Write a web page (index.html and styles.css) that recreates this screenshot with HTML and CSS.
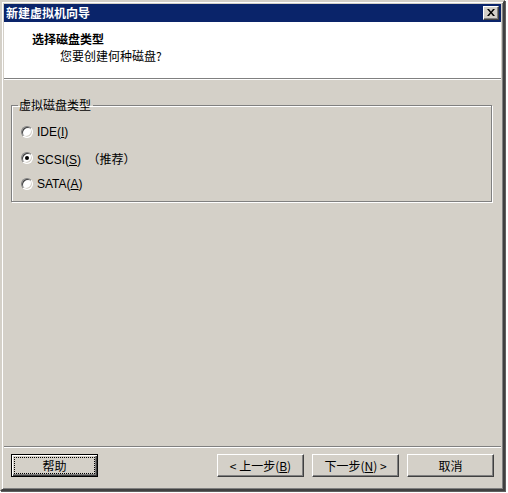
FILE: index.html
```html
<!DOCTYPE html>
<html lang="zh-CN">
<head>
<meta charset="utf-8">
<title>新建虚拟机向导</title>
<link rel="stylesheet" href="styles.css">
</head>
<body>
<div class="window">
  <div class="titlebar">
    <span class="title">新建虚拟机向导</span>
    <span class="close-btn">
      <svg width="8" height="7" viewBox="0 0 8 7"><path d="M0 0h2l2 2.5L6 0h2L5 3.5 8 7H6L4 4.5 2 7H0l3-3.5z" fill="#000"/></svg>
    </span>
  </div>
  <div class="header">
    <div class="heading">选择磁盘类型</div>
    <div class="subheading">您要创建何种磁盘?</div>
  </div>
  <div class="content">
    <fieldset class="group">
      <legend class="legend">虚拟磁盘类型</legend>
      <div class="option"><span class="radio"></span><span class="label">IDE(<u>I</u>)</span></div>
      <div class="option"><span class="radio checked"></span><span class="label">SCSI(<u>S</u>) <span class="cjk">（推荐）</span></span></div>
      <div class="option"><span class="radio"></span><span class="label">SATA(<u>A</u>)</span></div>
    </fieldset>
  </div>
  <div class="separator"></div>
  <div class="buttons">
    <span class="btn default"><span class="focus">帮助</span></span>
    <span class="spacer"></span>
    <span class="btn">&lt; 上一步(<u>B</u>)</span>
    <span class="btn">下一步(<u>N</u>) &gt;</span>
    <span class="btn">取消</span>
  </div>
</div>
</body>
</html>
```

FILE: styles.css
```css
html, body {
  margin: 0;
  padding: 0;
  background: #ffffff;
}
body {
  width: 508px;
  height: 493px;
  font-family: "Liberation Sans", "Noto Sans CJK SC", sans-serif;
  font-size: 12px;
  color: #000;
}
.window {
  box-sizing: border-box;
  width: 505px;
  height: 491px;
  background: #d4d0c8;
  border: 2px solid;
  border-color: #d4d0c8 #404040 #404040 #d4d0c8;
  box-shadow: inset 1px 1px 0 #ffffff, inset -1px -1px 0 #808080, 1px 1px 0 #606060;
  padding: 2px;
  display: flex;
  flex-direction: column;
}
.titlebar {
  height: 18px;
  background: #0a246a;
  display: flex;
  align-items: center;
  justify-content: space-between;
  padding: 0 2px 0 2px;
}
.title {
  color: #fff;
  font-family: "Noto Sans CJK SC", sans-serif;
  font-weight: bold;
  font-size: 12px;
  line-height: 16px;
}
.close-btn {
  box-sizing: border-box;
  width: 16px;
  height: 14px;
  background: #d4d0c8;
  border: 1px solid;
  border-color: #ffffff #404040 #404040 #ffffff;
  box-shadow: inset -1px -1px 0 #808080;
  display: flex;
  align-items: center;
  justify-content: center;
  padding: 0 1px 1px 0;
}
.close-btn svg { display: block; }
.header {
  height: 57px;
  background: #ffffff;
  border-bottom: 1px solid #808080;
  box-shadow: 0 1px 0 #ffffff;
  box-sizing: border-box;
  padding: 9px 0 0 28px;
}
.heading {
  font-family: "Noto Sans CJK SC", sans-serif;
  font-weight: bold;
  font-size: 12px;
  line-height: 16px;
}
.subheading {
  font-family: "Noto Sans CJK SC", sans-serif;
  font-size: 12px;
  line-height: 16px;
  margin: 1px 0 0 28px;
}
.content {
  flex: 1;
  padding: 19px 9px 0 7px;
}
.group {
  margin: 0;
  padding: 7px 0 0 9px;
  height: 104px;
  box-sizing: border-box;
  border: 1px solid #808080;
  box-shadow: 1px 1px 0 #ffffff, inset 1px 1px 0 #ffffff;
}
.legend {
  font-family: "Noto Sans CJK SC", sans-serif;
  font-size: 12px;
  line-height: 14px;
  padding: 0 2px 0 1px;
  margin-left: -3px;
}
.option {
  display: flex;
  align-items: center;
  height: 26px;
}
.radio {
  box-sizing: border-box;
  width: 12px;
  height: 12px;
  border-radius: 50%;
  background: #ffffff;
  border: 1px solid;
  border-color: #808080 #ffffff #ffffff #808080;
  box-shadow: inset 1px 1px 0 #404040, inset -1px -1px 0 #d4d0c8;
  margin-right: 4px;
  display: flex;
  align-items: center;
  justify-content: center;
}
.radio.checked::after {
  content: "";
  width: 4px;
  height: 4px;
  border-radius: 50%;
  background: #000;
}
.label {
  font-family: "Liberation Sans", "Noto Sans CJK SC", sans-serif;
  font-size: 12px;
}
.cjk {
  font-family: "Noto Sans CJK SC", sans-serif;
  margin-left: 3px;
}
.separator {
  height: 1px;
  background: #808080;
  border-bottom: 1px solid #ffffff;
  margin: 0 0 6px 0;
}
.buttons {
  display: flex;
  gap: 8px;
  padding: 0 7px 10px 7px;
}
.spacer { flex: 1; }
.btn {
  box-sizing: border-box;
  width: 87px;
  height: 23px;
  background: #d4d0c8;
  border: 1px solid;
  border-color: #ffffff #404040 #404040 #ffffff;
  box-shadow: inset -1px -1px 0 #808080;
  display: flex;
  align-items: center;
  justify-content: center;
  font-family: "Noto Sans CJK SC", sans-serif;
  font-size: 12px;
  white-space: nowrap;
}
.btn.default {
  border: 1px solid #000;
  box-shadow: inset 1px 1px 0 #ffffff, inset -1px -1px 0 #404040, inset -2px -2px 0 #808080;
  padding: 3px;
}
.focus {
  flex: 1;
  align-self: stretch;
  display: flex;
  align-items: center;
  justify-content: center;
  outline: 1px dotted #000;
}
```
